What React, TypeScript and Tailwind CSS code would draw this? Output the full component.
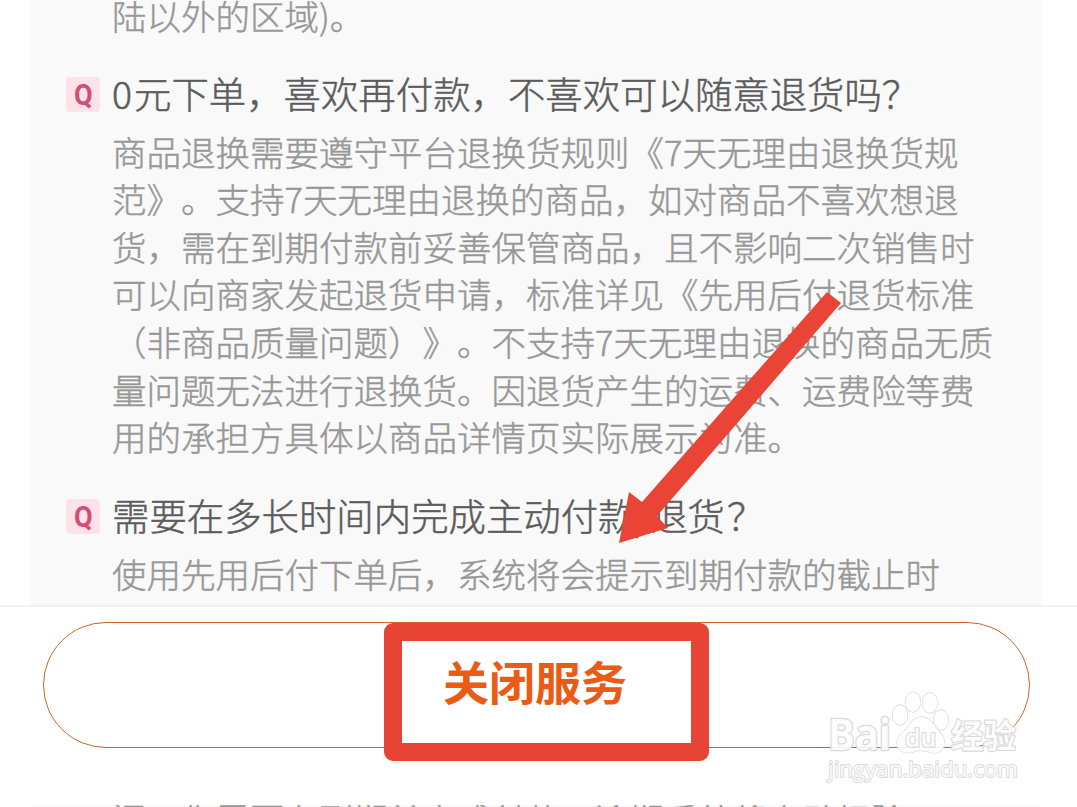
import React from "react";

type FaqItem = {
    question: React.ReactNode;
    lines: string[];
};

const faqItems: FaqItem[] = [
    {
        question: (
            <>
                <span className="tracking-[2px]">0</span>元下单，喜欢再付款，不喜欢可以随意退货吗？
            </>
        ),
        lines: [
            "商品退换需要遵守平台退换货规则《7天无理由退换货规",
            "范》。支持7天无理由退换的商品，如对商品不喜欢想退",
            "货，需在到期付款前妥善保管商品，且不影响二次销售时",
            "可以向商家发起退货申请，标准详见《先用后付退货标准",
            "（非商品质量问题）》。不支持7天无理由退换的商品无质",
            "量问题无法进行退换货。因退货产生的运费、运费险等费",
            "用的承担方具体以商品详情页实际展示为准。",
        ],
    },
    {
        question: (
            <>
                需要在多长时间内完成主动付款/退货<span className="ml-[2px]">？</span>
            </>
        ),
        lines: ["使用先用后付下单后，系统将会提示到期付款的截止时"],
    },
];

const bodyText = "whitespace-nowrap text-[34.5px] leading-[47.6px] text-[#979797] [-webkit-text-stroke:0.45px_#979797]";

const QBadge: React.FC = () => (
    <span className="flex h-[35px] w-[34px] shrink-0 items-center justify-center rounded-[4px] bg-[#fde3e9] pt-[2px] font-['Roboto',sans-serif] text-[30px] font-bold leading-none text-[#d24e74]">
        <span className="scale-x-90">Q</span>
    </span>
);

const FaqEntry: React.FC<{ item: FaqItem }> = ({ item }) => (
    <section className="mb-[25px]">
        <div className="flex h-[61px] items-center">
            <QBadge />
            <h3 className="ml-[12px] whitespace-nowrap text-[37.4px] leading-[57px] text-[#5c5c5c] [-webkit-text-stroke:0.5px_#5c5c5c] -mt-[2px]">
                {item.question}
            </h3>
        </div>
        <div className="ml-[46px] pt-[3px]">
            {item.lines.map((line) => (
                <p key={line} className={bodyText}>{line}</p>
            ))}
        </div>
    </section>
);

const Arrow: React.FC = () => (
    <svg className="absolute left-0 top-0" width="1077" height="807" viewBox="0 0 1077 807">
        <path d="M827 292L841 303L657 516L668 528L619 543L629 492L642 502Z" fill="#e94435" />
    </svg>
);

const Watermark: React.FC = () => (
    <svg className="absolute left-[820px] top-[685px]" width="210" height="105" viewBox="0 0 210 105">
        <g fill="#ffffff" fillOpacity=".9" stroke="#dadada" strokeWidth="1.3" strokeLinejoin="round" paintOrder="stroke">
            <text x="8" y="65" strokeWidth="2.6" fontSize="43" fontWeight="700" fontFamily="Open Sans, sans-serif" textLength="63" lengthAdjust="spacingAndGlyphs">Bai</text>
            <ellipse cx="80" cy="30" rx="7.5" ry="10" />
            <ellipse cx="93" cy="17" rx="7.5" ry="10" />
            <ellipse cx="110" cy="18" rx="7.5" ry="10" />
            <ellipse cx="121" cy="35" rx="7.5" ry="10" />
            <path d="M101 32C109 32 113 38 117 44C122 50 126 54 124 60C122 68 115 69 109 67C104 65 98 65 93 67C85 69 78 67 77 59C76 53 81 49 86 44C91 38 94 32 101 32Z" />
            <text x="85" y="62" strokeWidth="2.2" fontSize="25" fontWeight="600" fontFamily="Open Sans, sans-serif">du</text>
            <text x="131" y="63" strokeWidth="2.2" fontSize="32.5" fontWeight="700" fontFamily="Noto Sans CJK SC, sans-serif">经验</text>
            <text x="8" y="92" strokeWidth="1.8" fontSize="22" fontWeight="500" fontFamily="Open Sans, sans-serif" textLength="190" lengthAdjust="spacingAndGlyphs">jingyan.baidu.com</text>
        </g>
    </svg>
);

const App: React.FC = () => (
    <div className="relative flex h-[807px] w-[1077px] flex-col overflow-hidden bg-white font-['Noto_Sans_CJK_SC',sans-serif] font-light [text-spacing-trim:space-all]">
        <main className="ml-[31px] h-[605px] w-[1010px] shrink-0 overflow-hidden bg-[#f9f9f9] pl-[35px]">
            <p className={`${bodyText} -mt-[8px] mb-[24px] ml-[46px]`}>陆以外的区域)。</p>
            {faqItems.map((item, index) => (
                <FaqEntry key={index} item={item} />
            ))}
        </main>

        <footer className="h-[200px] shrink-0 border-t-2 border-[#f1f1f1] bg-white pl-[43px] pt-[15px]">
            <button className="flex h-[126px] w-[987px] items-center justify-center rounded-full border-[1.5px] border-[#cf6429] pb-[10px] pr-[3px] text-[46px] font-bold leading-none text-[#ea5b14]">
                关闭服务
            </button>
        </footer>

        {/* top edge of the list that shows under the footer */}
        <div className="ml-[31px] h-[2px] w-[1010px] shrink-0 overflow-hidden bg-[#f9f9f9] pl-[81px]">
            <p className={`${bodyText} -mt-[10px]`}>间，您需要在到期前完成付款，逾期系统将自动扣除</p>
        </div>

        <div className="absolute left-[384px] top-[623px] h-[138px] w-[325px] rounded-[9px] border-[18px] border-[#e84436]" />
        <Arrow />
        <Watermark />
    </div>
);

export default App;
